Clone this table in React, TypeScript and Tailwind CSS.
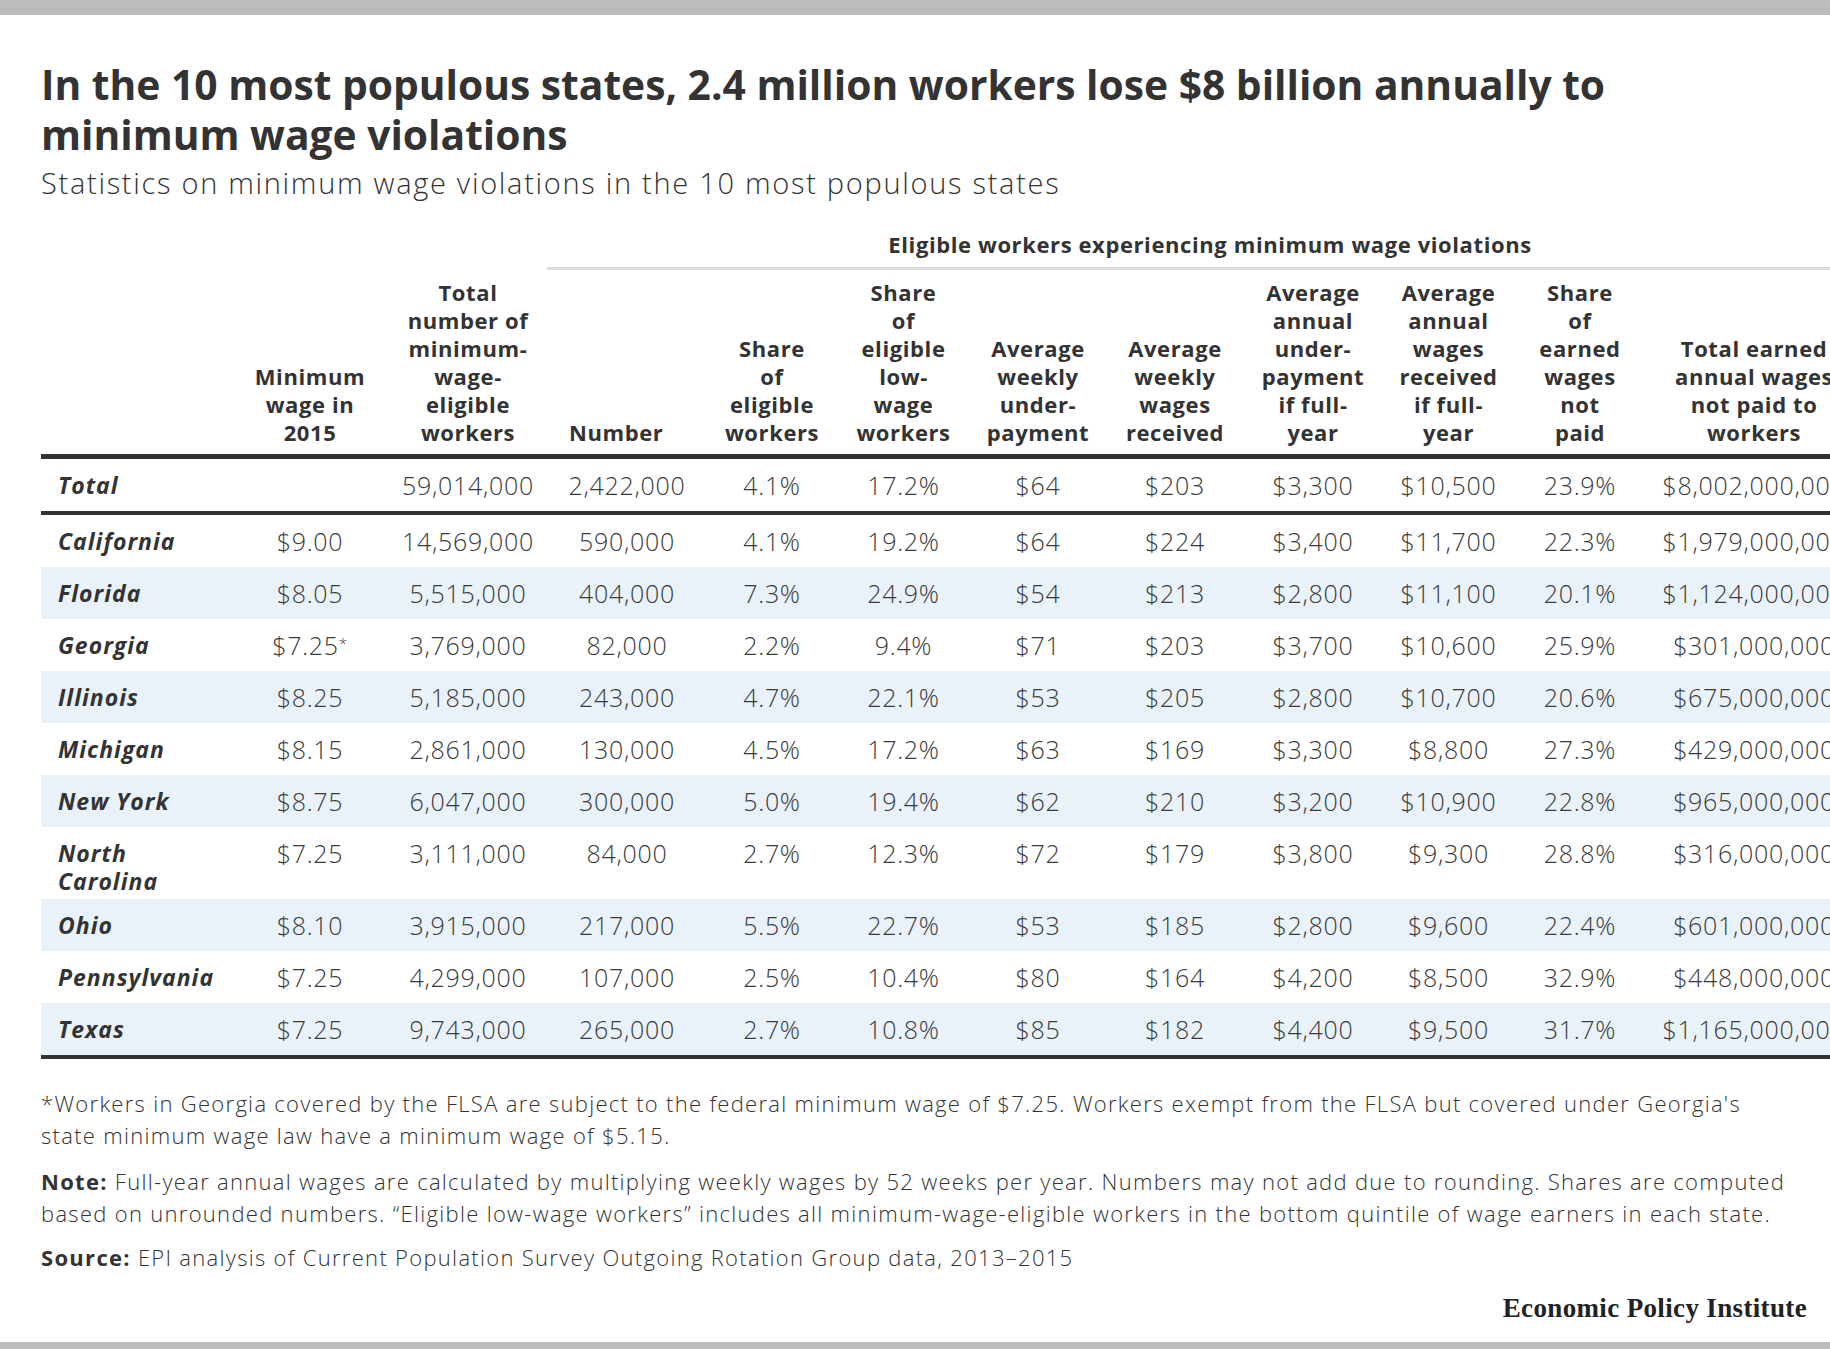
const rows = [
  ["California", "$9.00", "14,569,000", "590,000", "4.1%", "19.2%", "$64", "$224", "$3,400", "$11,700", "22.3%", "$1,979,000,000"],
  ["Florida", "$8.05", "5,515,000", "404,000", "7.3%", "24.9%", "$54", "$213", "$2,800", "$11,100", "20.1%", "$1,124,000,000"],
  ["Georgia", "$7.25*", "3,769,000", "82,000", "2.2%", "9.4%", "$71", "$203", "$3,700", "$10,600", "25.9%", "$301,000,000"],
  ["Illinois", "$8.25", "5,185,000", "243,000", "4.7%", "22.1%", "$53", "$205", "$2,800", "$10,700", "20.6%", "$675,000,000"],
  ["Michigan", "$8.15", "2,861,000", "130,000", "4.5%", "17.2%", "$63", "$169", "$3,300", "$8,800", "27.3%", "$429,000,000"],
  ["New York", "$8.75", "6,047,000", "300,000", "5.0%", "19.4%", "$62", "$210", "$3,200", "$10,900", "22.8%", "$965,000,000"],
  ["North Carolina", "$7.25", "3,111,000", "84,000", "2.7%", "12.3%", "$72", "$179", "$3,800", "$9,300", "28.8%", "$316,000,000"],
  ["Ohio", "$8.10", "3,915,000", "217,000", "5.5%", "22.7%", "$53", "$185", "$2,800", "$9,600", "22.4%", "$601,000,000"],
  ["Pennsylvania", "$7.25", "4,299,000", "107,000", "2.5%", "10.4%", "$80", "$164", "$4,200", "$8,500", "32.9%", "$448,000,000"],
  ["Texas", "$7.25", "9,743,000", "265,000", "2.7%", "10.8%", "$85", "$182", "$4,400", "$9,500", "31.7%", "$1,165,000,000"],
]

const total = ["Total", "", "59,014,000", "2,422,000", "4.1%", "17.2%", "$64", "$203", "$3,300", "$10,500", "23.9%", "$8,002,000,000"]

const headers = [
  [],
  ["Minimum", "wage in", "2015"],
  ["Total", "number of", "minimum-", "wage-", "eligible", "workers"],
  ["Number"],
  ["Share", "of", "eligible", "workers"],
  ["Share", "of", "eligible", "low-", "wage", "workers"],
  ["Average", "weekly", "under-", "payment"],
  ["Average", "weekly", "wages", "received"],
  ["Average", "annual", "under-", "payment", "if full-", "year"],
  ["Average", "annual", "wages", "received", "if full-", "year"],
  ["Share", "of", "earned", "wages", "not", "paid"],
  ["Total earned", "annual wages", "not paid to", "workers"],
]

function Lines({ lines }: { lines: string[] }) {
  return (
    <>
      {lines.map((l, i) => (
        <span key={i}>
          {l}
          {i < lines.length - 1 && <br />}
        </span>
      ))}
    </>
  )
}

function Value({ v }: { v: string }) {
  if (v.endsWith("*")) {
    return (
      <>
        {v.slice(0, -1)}
        <span className="relative top-[-6px] text-[15px] leading-none">*</span>
      </>
    )
  }
  return <>{v}</>
}

function DataRow({ r, band, isTotal }: { r: string[]; band?: boolean; isTotal?: boolean }) {
  return (
    <tr className={`${band ? "bg-[#e9f1f9]" : ""} ${isTotal ? "border-b-[4px] border-[#333]" : ""}`}>
      <td className="align-top pl-[17px] pt-[12px] pb-[4px] text-[23px] leading-[28px] tracking-[1px] font-bold italic text-[#333] whitespace-nowrap">
        {r[0] === "North Carolina" ? <Lines lines={["North", "Carolina"]} /> : r[0]}
      </td>
      {r.slice(1).map((v, i) => (
        <td
          key={i}
          className="align-top py-[8px] text-center text-[25px] leading-[36px] tracking-[0.7px] font-light text-[#3a3a3a] whitespace-nowrap"
        >
          <Value v={v} />
        </td>
      ))}
    </tr>
  )
}

export default function App() {
  return (
    <div className="w-full h-[1349px] flex flex-col overflow-hidden bg-white font-['Open_Sans',sans-serif] text-[#333]">
      <div className="h-[15px] bg-[#bcbcbc] shrink-0" />

      <div className="px-[41px]">
        <h1 className="mt-[44px] text-[40.75px] leading-[50px] font-bold text-[#333] whitespace-nowrap">
          In the 10 most populous states, 2.4 million workers lose $8 billion annually to
          <br />
          minimum wage violations
        </h1>
        <div className="mt-[7px] text-[29px] leading-[34px] tracking-[1.7px] font-light text-[#333] whitespace-nowrap">
          Statistics on minimum wage violations in the 10 most populous states
        </div>

        <table className="mt-[26px] table-fixed w-[1822px]">
          <colgroup>
            <col className="w-[190px]" />
            <col className="w-[158px]" />
            <col className="w-[158px]" />
            <col className="w-[160px]" />
            <col className="w-[130px]" />
            <col className="w-[133px]" />
            <col className="w-[136px]" />
            <col className="w-[138px]" />
            <col className="w-[138px]" />
            <col className="w-[133px]" />
            <col className="w-[130px]" />
            <col className="w-[218px]" />
          </colgroup>
          <thead>
            <tr>
              <th colSpan={3} />
              <th
                colSpan={9}
                className="pt-[4px] pb-[9px] border-b-[3px] border-[#dcdcdc] text-center text-[22px] leading-[28px] tracking-[0.6px] font-bold text-[#333] whitespace-nowrap"
              >
                <span className="pl-[10px]">Eligible workers experiencing minimum wage violations</span>
              </th>
            </tr>
            <tr className="border-b-[5px] border-[#333]">
              {headers.map((h, i) => (
                <th
                  key={i}
                  className={`align-bottom py-[8px] text-[22px] leading-[28px] tracking-[0.6px] font-bold text-[#333] whitespace-nowrap ${
                    i === 3 ? "text-left pl-[22px]" : "text-center"
                  }`}
                >
                  <Lines lines={h} />
                </th>
              ))}
            </tr>
          </thead>
          <tbody>
            <DataRow r={total} isTotal />
            {rows.map((r, i) => (
              <DataRow key={r[0]} r={r} band={i % 2 === 1} />
            ))}
            <tr className="border-t-[4px] border-[#333]">
              <td colSpan={12} className="h-0 p-0" />
            </tr>
          </tbody>
        </table>

        <div className="mt-[28px] text-[22px] leading-[32px] tracking-[1.3px] font-light text-[#333] whitespace-nowrap">
          <p>
            *Workers in Georgia covered by the FLSA are subject to the federal minimum wage of $7.25. Workers exempt from the FLSA but covered under Georgia's
            <br />
            state minimum wage law have a minimum wage of $5.15.
          </p>
          <p className="mt-[14px]">
            <span className="font-bold">Note:</span> Full-year annual wages are calculated by multiplying weekly wages by 52 weeks per year. Numbers may not add due to rounding. Shares are computed
            <br />
            based on unrounded numbers. “Eligible low-wage workers” includes all minimum-wage-eligible workers in the bottom quintile of wage earners in each state.
          </p>
          <p className="mt-[12px]">
            <span className="font-bold">Source:</span> EPI analysis of Current Population Survey Outgoing Rotation Group data, 2013–2015
          </p>
        </div>
      </div>

      <div className="mt-[20px] pr-[23px] text-right font-['Liberation_Serif',serif] font-bold text-[27px] leading-[30px] tracking-[0.35px] text-[#222]">
        Economic Policy Institute
      </div>

      <div className="flex-1" />
      <div className="h-[7px] bg-[#bcbcbc] shrink-0" />
    </div>
  )
}
